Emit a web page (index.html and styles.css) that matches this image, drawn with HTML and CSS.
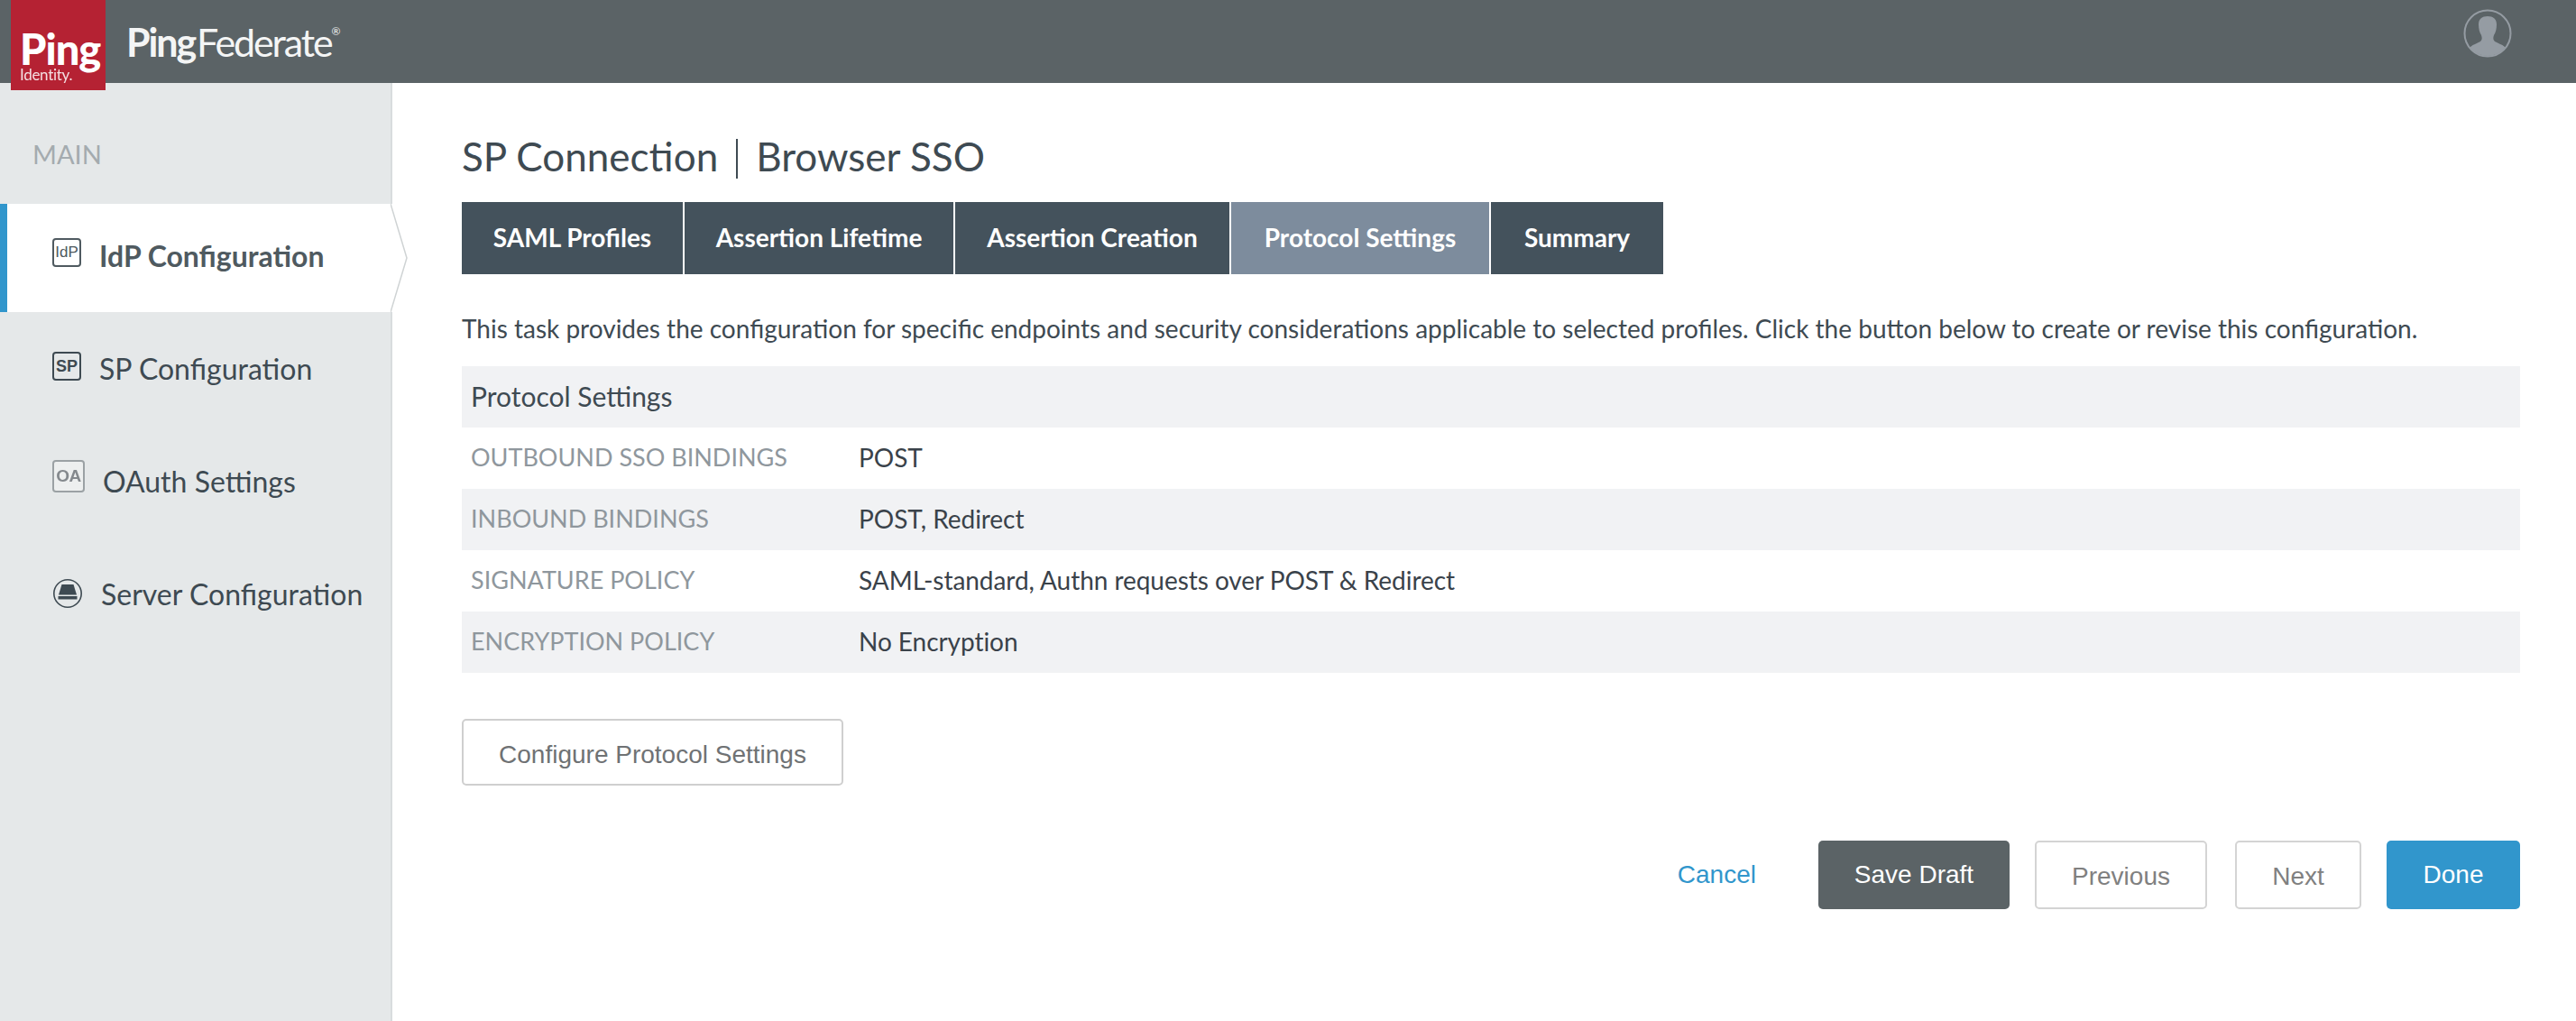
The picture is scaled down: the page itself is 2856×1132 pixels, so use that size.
FILE: index.html
```html
<!DOCTYPE html>
<html>
  <head>
    <title>PingFederate</title>
    <link rel="stylesheet" href="styles.css">
  </head>
  <body>
    <header class="topbar">
      <div class="logo">
        <span class="logo-ping">Ping</span>
        <span class="logo-identity">Identity.</span>
      </div>
      <div class="product"><b>Ping</b>Federate<sup>®</sup></div>
      <svg class="avatar" width="54" height="54" viewBox="0 0 54 54">
        <defs>
          <clipPath id="avatarClip"><circle cx="27" cy="27" r="25"/></clipPath>
        </defs>
        <circle cx="27" cy="27" r="25.5" fill="none" stroke="#959ca3" stroke-width="2"/>
        <path clip-path="url(#avatarClip)" fill="#959ca3" d="M17 17c0-6 4-9 10-9s10 3 10 9c0 5-1 9-3 12-1 3-1 5 1 7 3 2 8 3 11 6v12H8V42c3-3 8-4 11-6 2-2 2-4 1-7-2-3-3-7-3-12z"/>
      </svg>
    </header>

    <div class="layout">
      <aside class="sidebar">
        <div class="sidebar-title">MAIN</div>
        <nav class="nav">
          <a class="nav-item active">
            <span class="nav-icon">IdP</span>
            <span class="nav-label">IdP Configuration</span>
            <svg class="nav-arrow" width="20" height="120" viewBox="0 0 20 120">
              <path d="M1 0 L18 60 L1 120 Z" fill="#fff"/>
              <path d="M0 0 L18 60 L0 120" fill="none" stroke="#cfd3d4" stroke-width="1.5"/>
            </svg>
          </a>
          <a class="nav-item">
            <span class="nav-icon sp">SP</span>
            <span class="nav-label">SP Configuration</span>
          </a>
          <a class="nav-item">
            <span class="nav-icon oa">OA</span>
            <span class="nav-label">OAuth Settings</span>
          </a>
          <a class="nav-item">
            <svg class="nav-svg" width="34" height="32" viewBox="0 0 34 32">
              <circle cx="17" cy="16" r="15.2" fill="none" stroke="#3e4a52" stroke-width="1.6"/>
              <path d="M10.500 6h13l3.500 11.500h-20z" fill="#3e4a52"/>
              <rect x="6.500" y="19" width="21" height="3.500" fill="#3e4a52"/>
            </svg>
            <span class="nav-label">Server Configuration</span>
          </a>
        </nav>
      </aside>

      <main class="content">
        <h1 class="page-title">
          <span>SP Connection</span>
          <span class="title-part">Browser SSO</span>
        </h1>

        <div class="tabs">
          <a class="tab w1">SAML Profiles</a>
          <a class="tab w2">Assertion Lifetime</a>
          <a class="tab w3">Assertion Creation</a>
          <a class="tab w4 current">Protocol Settings</a>
          <a class="tab w5">Summary</a>
        </div>

        <p class="intro">This task provides the configuration for specific endpoints and security considerations applicable to selected profiles. Click the button below to create or revise this configuration.</p>

        <div class="summary">
          <div class="row shaded heading">Protocol Settings</div>
          <div class="row">
            <div class="row-label">OUTBOUND SSO BINDINGS</div>
            <div class="row-value">POST</div>
          </div>
          <div class="row shaded">
            <div class="row-label">INBOUND BINDINGS</div>
            <div class="row-value">POST, Redirect</div>
          </div>
          <div class="row">
            <div class="row-label">SIGNATURE POLICY</div>
            <div class="row-value">SAML-standard, Authn requests over POST &amp; Redirect</div>
          </div>
          <div class="row shaded">
            <div class="row-label">ENCRYPTION POLICY</div>
            <div class="row-value">No Encryption</div>
          </div>
        </div>

        <button class="btn configure">Configure Protocol Settings</button>

        <div class="actions">
          <a class="cancel">Cancel</a>
          <button class="btn draft">Save Draft</button>
          <button class="btn outline previous">Previous</button>
          <button class="btn outline next">Next</button>
          <button class="btn done">Done</button>
        </div>
      </main>
    </div>
  </body>
</html>
```

FILE: styles.css
```css
body {
  font-family: Lato, "Open Sans", sans-serif;
  margin: 0;
  padding: 0;
  background-color: #fff;
  color: #3e4a52;
}

/* Top bar */
.topbar {
  height: 92px;
  background-color: #5b6366;
  display: flex;
  align-items: flex-start;
  padding-left: 12px;
  padding-right: 71px;
}

.logo {
  width: 105px;
  height: 100px;
  flex: none;
  background-color: #b52233;
  color: #fff;
  display: flex;
  flex-direction: column;
  padding-left: 10px;
  box-sizing: border-box;
  position: relative;
  z-index: 2;
}

.logo-ping {
  font-size: 47px;
  font-weight: 900;
  line-height: 42px;
  margin-top: 33px;
  letter-spacing: -1px;
}

.logo-identity {
  font-size: 17px;
  line-height: 16px;
  letter-spacing: -0.300px;
  opacity: 0.85;
}

.product {
  color: #f4f5f5;
  font-size: 43px;
  line-height: 60px;
  margin-top: 17px;
  margin-left: 23px;
  letter-spacing: -2.100px;
}

.product b {
  font-weight: 700;
  margin-right: 2px;
}

.product sup {
  font-size: 12px;
  line-height: 0;
  vertical-align: 24px;
  letter-spacing: 0;
}

.avatar {
  margin-left: auto;
  margin-top: 10px;
}

/* Page layout */
.layout {
  display: flex;
  min-height: 1040px;
}

.sidebar {
  width: 433px;
  flex: none;
  background-color: #e5e8e9;
  border-right: 2px solid #d8dcde;
}

.sidebar-title {
  color: #a4abaf;
  font-size: 29px;
  line-height: 34px;
  padding-left: 36px;
  padding-top: 62px;
  height: 72px;
}

.nav {
  display: flex;
  flex-direction: column;
  gap: 5px;
}

.nav-item {
  height: 120px;
  display: flex;
  align-items: center;
  padding-left: 58px;
  font-size: 32px;
  color: #3e4a52;
  position: relative;
}

.nav-label {
  margin-top: -5px;
}

.nav-item.active {
  background-color: #fff;
  color: #4f5a60;
  font-weight: 700;
  box-shadow: inset 8px 0 0 #3196cc;
  margin-right: -2px;
}

.nav-arrow {
  position: absolute;
  left: 433px;
  top: 0;
}

.nav-icon {
  width: 28px;
  height: 28px;
  border: 2px solid #4f5a60;
  border-radius: 4px;
  margin-right: 20px;
  margin-top: -12px;
  font-family: "Liberation Sans", sans-serif;
  font-size: 17px;
  font-weight: 400;
  line-height: 28px;
  text-align: center;
  color: #4f5a60;
  flex: none;
}

.nav-icon.sp {
  font-weight: 700;
  font-size: 18px;
  color: #3e4a52;
  border-color: #3e4a52;
  margin-top: -10px;
}

.nav-icon.oa {
  width: 32px;
  height: 32px;
  line-height: 32px;
  border-color: #9ba1a4;
  color: #84898d;
  font-weight: 700;
  font-size: 19px;
  letter-spacing: -0.500px;
  margin-top: -16px;
  background-color: #edefef;
  margin-right: 20px;
  filter: blur(0.5px);
}

.nav-svg {
  margin-right: 20px;
  margin-top: -6px;
  flex: none;
}

/* Main content */
.content {
  flex: 1;
  min-width: 0;
  padding-left: 77px;
  padding-right: 62px;
  padding-top: 62px;
}

.page-title {
  margin: 0;
  height: 44px;
  display: flex;
  align-items: flex-start;
  font-size: 44px;
  font-weight: 400;
  line-height: 38px;
  color: #3e4a52;
}

.title-part {
  border-left: 2px solid #3e4a52;
  margin-left: 20px;
  padding-left: 20px;
  height: 44px;
}

.tabs {
  display: flex;
  gap: 2px;
  margin-top: 26px;
}

.tab {
  height: 80px;
  box-sizing: border-box;
  display: flex;
  align-items: center;
  justify-content: center;
  background-color: #44525c;
  color: #fff;
  font-size: 28px;
  font-weight: 700;
  padding-bottom: 3px;
}

.tab.current {
  background-color: #7d8c9d;
}

.w1 { width: 245px; }
.w2 { width: 298px; }
.w3 { width: 304px; }
.w4 { width: 286px; }
.w5 { width: 191px; }

.intro {
  margin: 40px 0 22px;
  font-size: 28px;
  line-height: 40px;
  color: #3e4a52;
  white-space: nowrap;
}

.summary {
  font-size: 28px;
}

.row {
  height: 68px;
  box-sizing: border-box;
  display: flex;
  align-items: center;
  padding-left: 10px;
  padding-bottom: 3px;
}

.row.shaded {
  background-color: #f1f2f4;
}

.row.heading {
  font-size: 30px;
  color: #3e4a52;
}

.row-label {
  width: 431px;
  flex: none;
  font-size: 27px;
  color: #8f979d;
}

.row-value {
  color: #3a424a;
  margin-left: -1px;
  letter-spacing: -0.050px;
}

/* Buttons */
.btn {
  font-family: "Liberation Sans", Arial, sans-serif;
  font-size: 28px;
  box-sizing: border-box;
  border-radius: 5px;
  cursor: pointer;
  padding: 0;
}

.configure {
  display: block;
  margin-top: 51px;
  width: 423px;
  height: 74px;
  background-color: #fff;
  border: 2px solid #cfcfcf;
  color: #6f7274;
  padding-top: 6px;
}

.actions {
  margin-top: 61px;
  display: flex;
  align-items: center;
  justify-content: flex-end;
}

.cancel {
  font-family: "Liberation Sans", Arial, sans-serif;
  font-size: 28px;
  color: #3196cc;
  margin-right: 69px;
}

.draft {
  width: 212px;
  height: 76px;
  border: none;
  background-color: #5b6366;
  color: #fff;
}

.outline {
  height: 76px;
  background-color: #fff;
  border: 2px solid #d4d4d4;
  color: #808080;
  padding-top: 4px;
}

.previous {
  width: 191px;
  margin-left: 28px;
}

.next {
  width: 140px;
  margin-left: 31px;
}

.done {
  width: 148px;
  height: 76px;
  margin-left: 28px;
  border: none;
  background-color: #3196cc;
  color: #fff;
}
```
